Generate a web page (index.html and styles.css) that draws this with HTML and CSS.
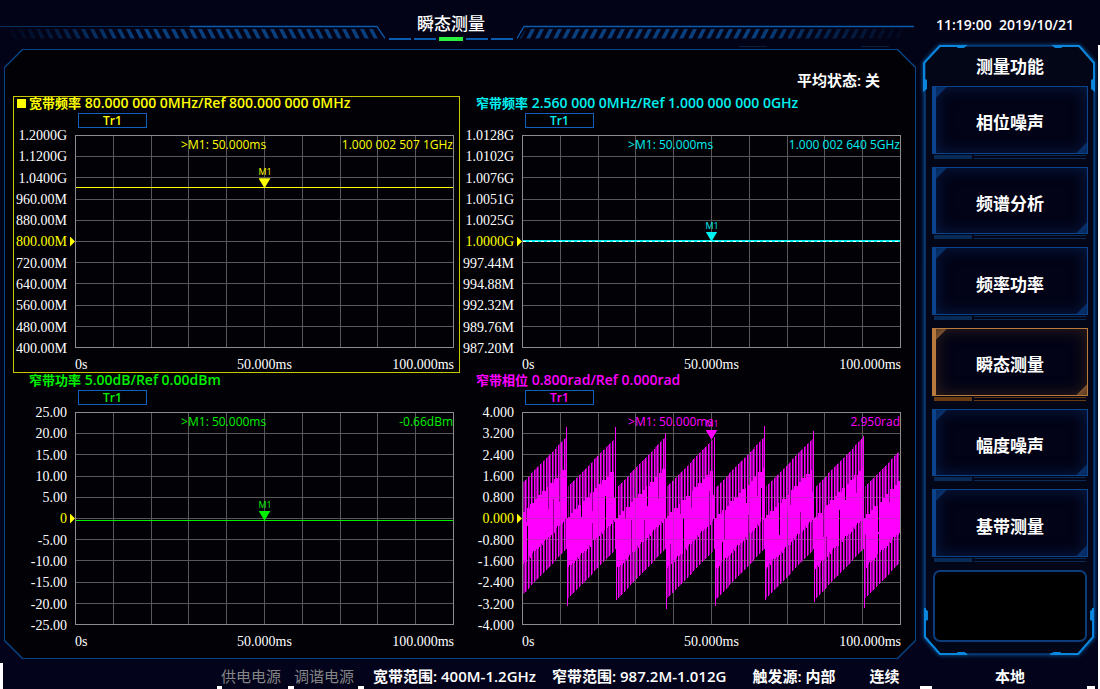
FILE: index.html
```html
<!DOCTYPE html>
<html lang="zh-CN">
<head>
<meta charset="utf-8">
<meta name="viewport" content="width=device-width, initial-scale=1">
<title>瞬态测量</title>
<link rel="stylesheet" href="styles.css">
</head>
<body>
<svg class="defs" aria-hidden="true">
  <defs>
    <path id="grid" d="M38.5 0V213M76.5 0V213M113.5 0V213M151.5 0V213M189.5 0V213M227.5 0V213M265.5 0V213M302.5 0V213M340.5 0V213M0 21.5H379M0 42.5H379M0 64.5H379M0 85.5H379M0 106.5H379M0 127.5H379M0 148.5H379M0 170.5H379M0 191.5H379"/>
    <pattern id="hatchL" width="9" height="10" patternUnits="userSpaceOnUse" y="29"><path d="M0 0h4l5 10h-4z" fill="#083f7c"/></pattern>
    <pattern id="hatchR" width="9" height="10" patternUnits="userSpaceOnUse" y="29"><path d="M5 0h4l-5 10h-4z" fill="#083f7c"/></pattern>
    <linearGradient id="fadeL"><stop offset="0" stop-color="#fff" stop-opacity="0"/><stop offset=".35" stop-color="#fff"/></linearGradient>
    <linearGradient id="fadeR"><stop offset=".6" stop-color="#fff"/><stop offset="1" stop-color="#fff" stop-opacity="0"/></linearGradient>
    <mask id="maskL"><path d="M0 0H385V48H0z" fill="url(#fadeL)"/></mask>
    <mask id="maskR"><path d="M0 0H399V48H0z" fill="url(#fadeR)"/></mask>
  </defs>
</svg>
<div class="page">
  <header class="topbar">
    <svg class="wing" viewBox="0 0 385 48" preserveAspectRatio="xMaxYMin slice" aria-hidden="true">
      <g mask="url(#maskL)"><path d="M8 29H375L382 38.500H8z" fill="url(#hatchL)"/></g>
      <path d="M0 26.500H200" stroke="#06305f" fill="none"/>
      <path d="M190 26.500H377L385 38.500" stroke="#0a5cae" stroke-width="1.300" fill="none"/>
    </svg>
    <div class="heading">
      <h1>瞬态测量</h1>
      <div class="dashes"><i></i><i></i><i class="on"></i><i></i><i></i></div>
    </div>
    <svg class="wing" viewBox="0 0 399 48" preserveAspectRatio="xMinYMin slice" aria-hidden="true">
      <g mask="url(#maskR)"><path d="M9 29H392V38.500H3z" fill="url(#hatchR)"/></g>
      <path d="M0 38.500L7 26.500H397" stroke="#0a5cae" stroke-width="1.300" fill="none"/>
      <path d="M222 46.500H250M344 46.500H372" stroke="#061f40" fill="none"/>
    </svg>
  </header>
  <time class="clock">11:19:00  2019/10/21</time>

  <main class="frame">
    <p class="average">平均状态: 关</p>
    <div class="charts">
      <section class="panel wide active">
        <h2><span class="name">宽带频率</span> 80.000 000 0MHz/Ref 800.000 000 0MHz</h2>
        <div class="trace-tag">Tr1</div>
        <ol class="yaxis"><li>1.2000G</li><li>1.1200G</li><li>1.0400G</li><li>960.00M</li><li>880.00M</li><li class="ref">800.00M</li><li>720.00M</li><li>640.00M</li><li>560.00M</li><li>480.00M</li><li>400.00M</li></ol>
        <div class="plot">
          <svg viewBox="0 0 379 213" preserveAspectRatio="none" aria-hidden="true"><use href="#grid" class="grid"/><path class="edge" d="M.5 .5H378.500V212.500H.5z"/><path class="trace" d="M1 52.500H378"/></svg>
          <div class="marker at-wide"><span>M1</span></div>
          <div class="readout"><span>&gt;M1: 50.000ms</span><span>1.000 002 507 1GHz</span></div>
        </div>
        <div class="xaxis"><span>0s</span><span>50.000ms</span><span>100.000ms</span></div>
      </section>

      <section class="panel narrow">
        <h2><span class="name">窄带频率</span> 2.560 000 0MHz/Ref 1.000 000 000 0GHz</h2>
        <div class="trace-tag">Tr1</div>
        <ol class="yaxis"><li>1.0128G</li><li>1.0102G</li><li>1.0076G</li><li>1.0051G</li><li>1.0025G</li><li class="ref">1.0000G</li><li>997.44M</li><li>994.88M</li><li>992.32M</li><li>989.76M</li><li>987.20M</li></ol>
        <div class="plot">
          <svg viewBox="0 0 379 213" preserveAspectRatio="none" aria-hidden="true"><use href="#grid" class="grid"/><path class="edge" d="M.5 .5H378.500V212.500H.5z"/><path class="trace" d="M1 105.500H378M1 106.500H378"/><path class="dotted" d="M1 106.500H378"/></svg>
          <div class="marker at-narrow"><span>M1</span></div>
          <div class="readout"><span>&gt;M1: 50.000ms</span><span>1.000 002 640 5GHz</span></div>
        </div>
        <div class="xaxis"><span>0s</span><span>50.000ms</span><span>100.000ms</span></div>
      </section>

      <section class="panel power">
        <h2><span class="name">窄带功率</span> 5.00dB/Ref 0.00dBm</h2>
        <div class="trace-tag">Tr1</div>
        <ol class="yaxis"><li>25.00</li><li>20.00</li><li>15.00</li><li>10.00</li><li>5.00</li><li class="ref">0</li><li>-5.00</li><li>-10.00</li><li>-15.00</li><li>-20.00</li><li>-25.00</li></ol>
        <div class="plot">
          <svg viewBox="0 0 379 213" preserveAspectRatio="none" aria-hidden="true"><use href="#grid" class="grid"/><path class="edge" d="M.5 .5H378.500V212.500H.5z"/><path class="trace" d="M1 108.500H378"/></svg>
          <div class="marker at-power"><span>M1</span></div>
          <div class="readout"><span>&gt;M1: 50.000ms</span><span>-0.66dBm</span></div>
        </div>
        <div class="xaxis"><span>0s</span><span>50.000ms</span><span>100.000ms</span></div>
      </section>

      <section class="panel phase">
        <h2><span class="name">窄带相位</span> 0.800rad/Ref 0.000rad</h2>
        <div class="trace-tag">Tr1</div>
        <ol class="yaxis"><li>4.000</li><li>3.200</li><li>2.400</li><li>1.600</li><li>0.800</li><li class="ref">0.000</li><li>-0.800</li><li>-1.600</li><li>-2.400</li><li>-3.200</li><li>-4.000</li></ol>
        <div class="plot">
          <svg viewBox="0 0 379 213" preserveAspectRatio="none" aria-hidden="true"><use href="#grid" class="grid"/><path class="edge" d="M.5 .5H378.500V212.500H.5z"/><path class="trace dim" id="phase-dim"/><path class="trace" id="phase-trace"/><use href="#grid" class="grid over"/></svg>
          <div class="marker at-phase"><span>M1</span></div>
          <div class="readout"><span>&gt;M1: 50.000ms</span><span>2.950rad</span></div>
        </div>
        <div class="xaxis"><span>0s</span><span>50.000ms</span><span>100.000ms</span></div>
      </section>
    </div>
  </main>

  <nav class="side" aria-label="测量功能">
    <svg class="side-frame" viewBox="0 0 174 614" preserveAspectRatio="none" aria-hidden="true">
      <path d="M17 2H157L172 18V594L156 611H17L2 594V18z" fill="#020617" stroke="#0a3c7a" stroke-width="1.500"/>
      <g fill="none" stroke="#0a86dc" stroke-width="2">
        <path d="M42 2H17L1 19V46M132 2H157L172 19V46"/>
        <path d="M2 565V594L17 611H44M171 565V594L156 611H128"/>
      </g>
      <path fill="#0a86dc" d="M32 1h13l-4 3h-6zM129 1h13l-3 3h-6zM0 34l4 2v9l-4 3zM173 34l-4 2v9l4 3zM1 565l4 3v9l-4 2zM172 565l-4 3v9l4 2zM32 612h13l-3-3h-7zM128 612h13l-3-3h-7z"/>
    </svg>
    <h2>测量功能</h2>
    <ul>
      <li><button type="button">相位噪声</button></li>
      <li><button type="button">频谱分析</button></li>
      <li><button type="button">频率功率</button></li>
      <li><button type="button" class="selected" aria-current="page">瞬态测量</button></li>
      <li><button type="button">幅度噪声</button></li>
      <li><button type="button">基带测量</button></li>
    </ul>
    <div class="blank"></div>
  </nav>

  <footer class="status">
    <div class="supplies"><span>供电电源</span><span>调谐电源</span></div>
    <div class="ranges"><span>宽带范围: 400M-1.2GHz</span><span>窄带范围: 987.2M-1.012G</span></div>
    <span class="trigger">触发源: 内部</span>
    <span>连续</span>
  </footer>
  <div class="local">本地</div>
</div>
<script src="phase.js"></script>
</body>
</html>
```
FILE: styles.css
```css
* { box-sizing: border-box; }

body {
  margin: 0;
  background: #020316;
  color: #fff;
  font-family: "Open Sans", "Noto Sans CJK SC", sans-serif;
  font-size: 15px;
}

h1, h2, p, ol, ul { margin: 0; padding: 0; font-weight: 600; }
ol, ul { list-style: none; }

.defs { position: absolute; width: 0; height: 0; }

.page {
  display: grid;
  grid-template-columns: minmax(0, 1fr) 184px;
  grid-template-rows: 48px minmax(0, 1fr) 30px;
  height: 100vh;
  min-height: 560px;
  background:
    linear-gradient(#fff, #fff) 0 100% / 3px 26px no-repeat,
    linear-gradient(#fff, #fff) 217px 100% / 5px 3px no-repeat,
    linear-gradient(#fff, #fff) 288px 100% / 6px 3px no-repeat,
    linear-gradient(#fff, #fff) 358px 100% / 6px 3px no-repeat,
    linear-gradient(#fff, #fff) right 168px bottom 0 / 12px 3px no-repeat,
    linear-gradient(#fff, #fff) right 5px bottom 0 / 8px 3px no-repeat,
    linear-gradient(#fff, #fff) right 0 top 45px / 2px 100% no-repeat,
    linear-gradient(#020316, #03041c);
}

/* top bar */
.topbar { display: grid; grid-template-columns: 385fr 132px 399fr; }
.wing { display: block; width: 100%; height: 48px; }
.heading { display: flex; flex-direction: column; align-items: center; padding-top: 12px; }
.heading h1 { font-size: 17px; line-height: 24px; font-weight: 500; }
.dashes { display: flex; align-items: center; gap: 3px; height: 5px; }
.dashes i { width: 22px; height: 2px; background: #0a5cae; }
.dashes .on { width: 24px; height: 4px; background: #2bf03c; }

.clock {
  align-self: center;
  padding-left: 20px;
  font-size: 14px;
  font-weight: 600;
  white-space: pre;
}

/* chart frame with cut corners */
.frame {
  --cut: 18px;
  position: relative;
  display: flex;
  flex-direction: column;
  margin: 1px 0 0 4px;
  padding: 0 9px 9px;
  background: #084586;
  clip-path: polygon(var(--cut) 0, calc(100% - var(--cut)) 0, 100% var(--cut), 100% calc(100% - var(--cut)), calc(100% - var(--cut)) 100%, var(--cut) 100%, 0 calc(100% - var(--cut)), 0 var(--cut));
}
.frame::before {
  content: "";
  position: absolute;
  inset: 1px;
  background: #010106;
  clip-path: polygon(var(--cut) 0, calc(100% - var(--cut)) 0, 100% var(--cut), 100% calc(100% - var(--cut)), calc(100% - var(--cut)) 100%, var(--cut) 100%, 0 calc(100% - var(--cut)), 0 var(--cut));
}
.average, .charts { position: relative; }
.average { height: 47px; padding: 20px 27px 0 0; line-height: 22px; text-align: right; }

.charts {
  flex: 1;
  display: grid;
  grid-template: 1fr 1fr / 1fr 1fr;
  min-height: 0;
}

.panel {
  display: grid;
  grid-template-columns: 61px minmax(0, 1fr);
  grid-template-rows: 16px 15px minmax(0, 1fr) 24px;
  padding-right: 5px;
  border: 1px solid transparent;
  color: var(--tone);
}
.wide { --tone: #ffff00; }
.narrow { --tone: #00f0f0; }
.power { --tone: #00f000; }
.phase { --tone: #ff00ff; }
.active { border-color: #c8c800; }

.panel h2 {
  position: relative;
  grid-column: 1 / -1;
  padding-left: 15px;
  font-size: 14px;
  line-height: 12px;
  white-space: nowrap;
}
.panel .name { font-size: 13px; }
.active h2::before {
  content: "";
  position: absolute;
  left: 3px;
  top: 2px;
  width: 9px;
  height: 9px;
  background: var(--tone);
}

.trace-tag {
  grid-column: 2;
  width: 69px;
  margin-left: 3px;
  border: 1px solid #1060c0;
  font-size: 12px;
  font-weight: 600;
  line-height: 13px;
  text-align: center;
}

.yaxis {
  display: flex;
  flex-direction: column;
  justify-content: space-between;
  margin: 0 8px -9px 0;
  color: #fff;
  font: 14px/16px "Liberation Serif", serif;
  text-align: right;
}
.yaxis .ref { color: #ffff00; }

.plot { position: relative; margin-top: 7px; }
.plot svg { position: absolute; inset: 0; width: 100%; height: 100%; shape-rendering: crispEdges; }
.plot::before {
  content: "";
  position: absolute;
  left: -5px;
  top: calc(50% - 5px);
  width: 5px;
  height: 10px;
  background: #ffff00;
  clip-path: polygon(0 0, 100% 50%, 0 100%);
}
.grid { fill: none; stroke: #585858; }
.over { opacity: .25; }
.edge { fill: none; stroke: #8c8c8c; }
.trace { fill: none; stroke: var(--tone); }
.dim { opacity: .55; }
.dotted { fill: none; stroke: #fff; stroke-dasharray: 3 3; }

.marker {
  position: absolute;
  left: 50%;
  width: 12px;
  height: 10px;
  margin: -10px 0 0 -6px;
}
.marker::before {
  content: "";
  position: absolute;
  inset: 0;
  background: var(--tone);
  clip-path: polygon(0 0, 100% 0, 50% 100%);
}
.marker span {
  position: absolute;
  bottom: 11px;
  left: 0;
  font-size: 9px;
  line-height: 10px;
}
.at-wide { top: 25%; }
.at-narrow { top: 50%; }
.at-power { top: 51%; }
.at-phase { top: 13%; }

.readout {
  position: relative;
  display: flex;
  justify-content: space-between;
  padding: 1px 1px 0 28%;
  font-size: 12px;
  line-height: 18px;
}

.xaxis {
  grid-column: 2;
  display: grid;
  grid-template-columns: 1fr auto 1fr;
  align-items: end;
  color: #fff;
  font: 14px/14px "Liberation Serif", serif;
}
.xaxis span:last-child { text-align: right; }

/* side menu */
.side {
  position: relative;
  display: flex;
  flex-direction: column;
  margin: -4px 4px 2px 7px;
  padding: 1px 8px 15px 9px;
}
.side-frame {
  position: absolute;
  inset: 0;
  width: 100%;
  height: 100%;
  filter: drop-shadow(0 0 2px #0660a8);
}
.side h2, .side ul, .blank { position: relative; }
.side h2 { height: 41px; font-size: 17px; line-height: 44px; text-align: center; }
.side ul { flex: 1; display: flex; flex-direction: column; }
.side li {
  --line: #0b438c;
  --under: #072a56;
  --glow: #061d48;
  position: relative;
  flex: 1;
  padding-bottom: 13px;
}
.side li:has(.selected) { --line: #b97a3e; --under: #6a3a10; --glow: #33221c; }
.side button {
  display: block;
  width: 100%;
  height: 100%;
  padding: 7px 3px 0 0;
  border: 1px solid var(--line);
  border-left-width: 4px;
  background:
    linear-gradient(135deg, var(--line) 7px, transparent 8px),
    linear-gradient(315deg, var(--line) 7px, transparent 8px),
    #020316;
  box-shadow: inset 0 0 16px var(--glow);
  color: #fff;
  font: 600 17px/24px "Open Sans", "Noto Sans CJK SC", sans-serif;
}
.side li::after {
  content: "";
  position: absolute;
  left: 2px;
  right: 2px;
  bottom: 8px;
  height: 4px;
  background:
    linear-gradient(var(--under), var(--under)) 0 0 / 38px 4px no-repeat,
    linear-gradient(var(--under), var(--under)) 40px 0 / 100% 1px no-repeat,
    linear-gradient(var(--under), var(--under)) 40px 3px / 100% 1px no-repeat;
}
.blank { height: 72px; margin: 0 1px; border: 2px solid #0c3c7c; border-radius: 7px; background: #000; }

/* status line */
.status {
  display: flex;
  align-items: center;
  padding: 4px 0 0 221px;
  font-size: 15px;
  font-weight: 600;
  line-height: 20px;
  white-space: nowrap;
}
.supplies { display: flex; gap: 13px; margin-right: 19px; color: #858585; font-weight: 400; }
.ranges { display: flex; gap: 16px; margin-right: 26px; }
.trigger { margin-right: 34px; }
.local { padding: 4px 0 0 4px; align-self: center; line-height: 20px; font-weight: 600; text-align: center; }
```
FILE: phase.js
```js
// Wrapped phase trace: a sawtooth band sampled one column at a time.
const PERIOD = 49.5;
const SLOPE = 1.04;
const spikes = [15, 15, 21, 25, 14, 19, 24, 60];
const drops = [184, 194, 188, 197, 194, 188, 190, 196];
const bright = [];
const dim = [];

for (let x = 1; x < 378; x += 1) {
  const shifted = x + 5;
  const tooth = Math.floor(shifted / PERIOD);
  const t = shifted - tooth * PERIOD;
  const rise = t * SLOPE;
  const topNotch = x % 11 === 4 ? 10 + (x * 7) % 24 : (x * 37) % 4;
  const bottomNotch = x % 13 === 5 ? 10 + (x * 5) % 26 : (x * 53) % 4;
  const outerTop = 76 - rise;
  const innerTop = 105 - rise + topNotch;
  const innerBottom = 159 - rise - bottomNotch;
  const outerBottom = 188 - rise;
  const line = (top, bottom) => `M${x + 0.5} ${top.toFixed(1)}V${bottom.toFixed(1)}`;

  if (t >= PERIOD - 1) {
    bright.push(line(spikes[tooth], 137));
  } else if (t < 1) {
    bright.push(line(106, drops[tooth]));
  } else {
    bright.push(x % 3 === 0 ? line(outerTop, outerBottom) : line(innerTop, innerBottom));
    if (x % 3 === 1 || x % 12 === 2) dim.push(line(outerTop, outerBottom));
  }
}

document.getElementById("phase-trace").setAttribute("d", bright.join(""));
document.getElementById("phase-dim").setAttribute("d", dim.join(""));
```
